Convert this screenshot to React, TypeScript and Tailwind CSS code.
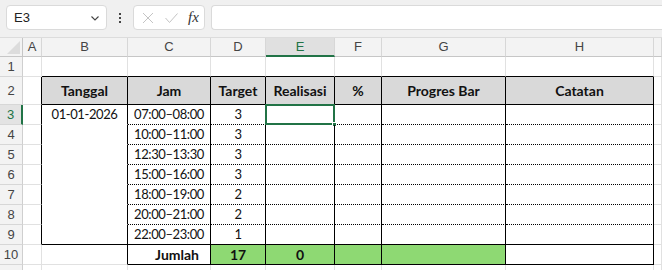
import React from 'react';

const COLS = ['A', 'B', 'C', 'D', 'E', 'F', 'G', 'H', ''];

const rows = [
  { jam: '07:00–08:00', target: '3' },
  { jam: '10:00–11:00', target: '3' },
  { jam: '12:30–13:30', target: '3' },
  { jam: '15:00–16:00', target: '3' },
  { jam: '18:00–19:00', target: '2' },
  { jam: '20:00–21:00', target: '2' },
  { jam: '22:00–23:00', target: '1' },
];

const headers = ['Tanggal', 'Jam', 'Target', 'Realisasi', '%', 'Progres Bar', 'Catatan'];

const grid = 'border-r border-b border-[#e1e1e1]';
const hdrFont = "font-['Lato',sans-serif] font-bold text-[14px] text-[#111]";
const dataFont = "font-['Lato',sans-serif] text-[13px] tracking-[-0.4px] text-[#111]";

const RowHead: React.FC<{ n: string; h: string; active?: boolean }> = ({ n, h, active }) => (
  <div
    className={`${h} flex items-center justify-center border-b border-[#d7d7d7] font-['Liberation_Sans',sans-serif] text-[13px] ${
      active
        ? 'bg-[#e3e3e3] text-[#217346] border-r-2 border-r-[#217346]'
        : 'bg-[#f3f3f3] text-[#444] border-r border-r-[#cfcfcf]'
    }`}
  >
    {n}
  </div>
);

const Toolbar = () => (
  <div className="flex h-[38px] items-start gap-[6px] border-b border-[#dcdcdc] bg-[#f0f0f0] pl-[6px] pt-[5px]">
    <div className="flex h-[25px] w-[101px] items-center justify-between rounded-[4px] border border-[#dadada] bg-white pl-[7px] pr-[5px] font-['Liberation_Sans',sans-serif] text-[13px] text-[#222]">
      <span>E3</span>
      <svg width="12" height="12" viewBox="0 0 12 12" fill="none" stroke="#444" strokeWidth="1.1">
        <path d="M2.5 4.5 L6 8 L9.5 4.5" />
      </svg>
    </div>
    <div className="flex h-[25px] w-[14px] flex-col items-center justify-center gap-[2px]">
      <span className="h-[2px] w-[2px] bg-[#444]" />
      <span className="h-[2px] w-[2px] bg-[#444]" />
      <span className="h-[2px] w-[2px] bg-[#444]" />
    </div>
    <div className="flex h-[25px] w-[72px] items-center gap-[9px] rounded-[4px] border border-[#dadada] bg-white pl-[7px]">
      <svg width="14" height="14" viewBox="0 0 14 14" fill="none" stroke="#c4c4c4" strokeWidth="1">
        <path d="M2 2 L12 12 M12 2 L2 12" />
      </svg>
      <svg width="15" height="14" viewBox="0 0 15 14" fill="none" stroke="#c4c4c4" strokeWidth="1">
        <path d="M1.5 7 L5.5 11.5 L13.5 2.5" />
      </svg>
      <span className="font-['Liberation_Serif',serif] text-[15px] italic text-[#333]">fx</span>
    </div>
    <div className="h-[25px] flex-1 rounded-l-[4px] border border-r-0 border-[#dadada] bg-white" />
  </div>
);

export default function App() {
  return (
    <div className="h-[270px] w-[662px] overflow-hidden bg-white">
      <Toolbar />
      <div className="grid grid-cols-[23px_19px_86px_83px_55px_69px_47px_124px_148px_1fr]">
        {/* column header row */}
        <div className="relative h-[19px] border-r border-b border-[#c6c6c6] bg-[#f3f3f3]">
          <div className="absolute bottom-[2px] right-[2px] h-0 w-0 border-b-[13px] border-l-[13px] border-b-[#dcdcdc] border-l-transparent" />
        </div>
        {COLS.map((c) =>
          c === 'E' ? (
            <div
              key={c}
              className="flex h-[19px] items-center justify-center border-r border-r-[#d7d7d7] border-b-2 border-b-[#217346] bg-[#e0e0e0] font-['Liberation_Sans',sans-serif] text-[13px] text-[#217346]"
            >
              {c}
            </div>
          ) : (
            <div
              key={c || 'I'}
              className="flex h-[19px] items-center justify-center border-r border-r-[#d7d7d7] border-b border-b-[#c6c6c6] bg-[#f3f3f3] font-['Liberation_Sans',sans-serif] text-[13px] text-[#444]"
            >
              {c}
            </div>
          )
        )}

        {/* row 1 */}
        <RowHead n="1" h="h-[20px]" />
        <div className={`h-[20px] ${grid}`} />
        {['B', 'C', 'D', 'E', 'F', 'G', 'H'].map((c) => (
          <div key={c} className="h-[20px] border-r border-b border-r-[#e1e1e1] border-b-black" />
        ))}
        <div className={`h-[20px] ${grid}`} />

        {/* row 2: table header */}
        <RowHead n="2" h="h-[28px]" />
        <div className="h-[28px] border-r border-b border-r-black border-b-[#e1e1e1]" />
        {headers.map((t) => (
          <div
            key={t}
            className={`flex h-[28px] items-center justify-center border-r border-b border-black bg-[#d9d9d9] ${hdrFont}`}
          >
            {t}
          </div>
        ))}
        <div className={`h-[28px] ${grid}`} />

        {/* rows 3-9 */}
        {rows.map((r, i) => {
          const last = i === rows.length - 1;
          const bottom = last ? 'border-b-black' : 'border-b-black [border-bottom-style:dotted]';
          return (
            <React.Fragment key={r.jam}>
              <RowHead n={String(i + 3)} h="h-[20px]" active={i === 0} />
              <div className="h-[20px] border-r border-b border-r-black border-b-[#e1e1e1]" />
              <div
                className={`flex h-[20px] items-center justify-center border-r border-b border-r-black ${
                  last ? 'border-b-black' : 'border-b-white'
                } ${dataFont}`}
              >
                {i === 0 ? '01-01-2026' : ''}
              </div>
              <div className={`flex h-[20px] items-center justify-center border-r border-b border-r-black ${bottom} ${dataFont}`}>
                {r.jam}
              </div>
              <div className={`flex h-[20px] items-center justify-center border-r border-b border-r-black ${bottom} ${dataFont}`}>
                {r.target}
              </div>
              <div className={`relative h-[20px] border-r border-b border-r-black ${bottom}`}>
                {i === 0 && (
                  <>
                    <div className="absolute -left-[1px] -top-[1px] -bottom-[1px] -right-[1px] border-2 border-[#217346]" />
                    <div className="absolute -bottom-[3px] -right-[3px] h-[5px] w-[5px] border border-white bg-[#217346]" />
                  </>
                )}
              </div>
              <div className={`h-[20px] border-r border-b border-r-black ${bottom}`} />
              <div className={`h-[20px] border-r border-b border-r-black ${bottom}`} />
              <div className={`h-[20px] border-r border-b border-r-black ${bottom}`} />
              <div className={`h-[20px] ${grid}`} />
            </React.Fragment>
          );
        })}

        {/* row 10: totals */}
        <RowHead n="10" h="h-[20px]" />
        <div className={`h-[20px] ${grid}`} />
        <div className="h-[20px] border-r border-b border-r-black border-b-[#e1e1e1]" />
        <div className={`flex h-[20px] items-center justify-end border-r border-b border-black pr-[11px] ${hdrFont}`}>
          Jumlah
        </div>
        <div className={`flex h-[20px] items-center justify-center border-r border-b border-black bg-[#8ed973] ${hdrFont}`}>
          17
        </div>
        <div className={`flex h-[20px] items-center justify-center border-r border-b border-black bg-[#8ed973] ${hdrFont}`}>
          0
        </div>
        <div className="h-[20px] border-r border-b border-black bg-[#8ed973]" />
        <div className="h-[20px] border-r border-b border-black bg-[#8ed973]" />
        <div className="h-[20px] border-r border-b border-black" />
        <div className={`h-[20px] ${grid}`} />

        {/* row 11 (only its top edge is visible) */}
        <RowHead n="" h="h-[20px]" />
        {COLS.map((c) => (
          <div key={c || 'I'} className={`h-[20px] ${grid}`} />
        ))}
      </div>
    </div>
  );
}
